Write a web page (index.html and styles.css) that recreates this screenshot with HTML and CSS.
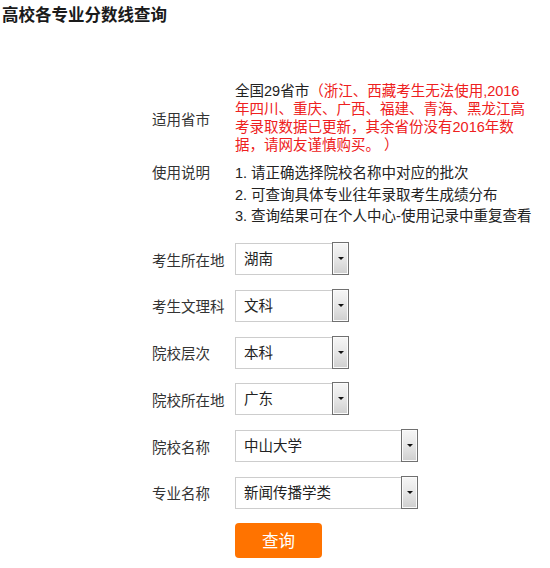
FILE: index.html
```html
<!DOCTYPE html>
<html lang="zh-CN">
<head>
<meta charset="utf-8">
<title>高校各专业分数线查询</title>
<link rel="stylesheet" href="styles.css">
</head>
<body>
<h1 class="title">高校各专业分数线查询</h1>
<div class="form">
  <div class="row row-intro">
    <div class="label">适用省市</div>
    <div class="value intro">全国29省市<span class="warn">（浙江、西藏考生无法使用,2016<br>年四川、重庆、广西、福建、青海、黑龙江高<br>考录取数据已更新，其余省份没有2016年数<br>据，请网友谨慎购买。 ）</span></div>
  </div>
  <div class="row row-usage">
    <div class="label">使用说明</div>
    <ul class="value usage">
      <li>1. 请正确选择院校名称中对应的批次</li>
      <li>2. 可查询具体专业往年录取考生成绩分布</li>
      <li>3. 查询结果可在个人中心-使用记录中重复查看</li>
    </ul>
  </div>
  <div class="row row-field first">
    <div class="label">考生所在地</div>
    <div class="select short"><span class="text">湖南</span><span class="arrow"></span></div>
  </div>
  <div class="row row-field">
    <div class="label">考生文理科</div>
    <div class="select short"><span class="text">文科</span><span class="arrow"></span></div>
  </div>
  <div class="row row-field">
    <div class="label">院校层次</div>
    <div class="select short"><span class="text">本科</span><span class="arrow"></span></div>
  </div>
  <div class="row row-field">
    <div class="label">院校所在地</div>
    <div class="select short"><span class="text">广东</span><span class="arrow"></span></div>
  </div>
  <div class="row row-field">
    <div class="label">院校名称</div>
    <div class="select long"><span class="text">中山大学</span><span class="arrow"></span></div>
  </div>
  <div class="row row-field">
    <div class="label">专业名称</div>
    <div class="select long"><span class="text">新闻传播学类</span><span class="arrow"></span></div>
  </div>
  <div class="row row-submit">
    <div class="label"></div>
    <button class="btn" type="button">查询</button>
  </div>
</div>
</body>
</html>
```
FILE: styles.css
```css
html, body {
  margin: 0;
  padding: 0;
  background: #ffffff;
}
body {
  font-family: "Liberation Sans", "Noto Sans CJK SC", sans-serif;
  font-size: 14.5px;
  color: #333333;
}
.title {
  margin: 0;
  padding: 5px 0 0 2px;
  font-size: 16.5px;
  line-height: 20px;
  font-weight: bold;
  color: #1a1a1a;
}
.form {
  margin: 57px 0 0 152px;
}
.row {
  display: flex;
}
.label {
  width: 83px;
  flex: none;
  color: #333333;
  white-space: nowrap;
}
.row-intro {
  align-items: center;
}
.intro {
  line-height: 18px;
  color: #222222;
  white-space: nowrap;
}
.warn {
  color: #ee2020;
}
.row-usage {
  margin-top: 9px;
  align-items: flex-start;
  line-height: 21.5px;
}
.usage {
  margin: 0;
  padding: 0;
  list-style: none;
  color: #222222;
  white-space: nowrap;
}
.row-field {
  margin-top: 14.8px;
  align-items: center;
}
.row-field.first {
  margin-top: 15.5px;
}
.select {
  display: flex;
  height: 32px;
  box-sizing: border-box;
  border: 1px solid #cdcdcd;
  border-right: none;
  background: #ffffff;
}
.select.short { width: 114px; }
.select.long { width: 183px; }
.select .text {
  flex: 1;
  padding-left: 8px;
  line-height: 30px;
  color: #222222;
}
.select .arrow {
  flex: none;
  width: 17px;
  margin: -2px 0 -1px;
  box-sizing: border-box;
  border: 1px solid #707070;
  background: linear-gradient(#f6f6f6, #e6e6e6 50%, #cfcfcf);
  box-shadow: inset 0 0 0 1px #fbfbfb;
  display: flex;
  align-items: center;
  justify-content: center;
}
.select .arrow::after {
  content: "";
  width: 0;
  height: 0;
  border-left: 3px solid transparent;
  border-right: 3px solid transparent;
  border-top: 3px solid #111111;
}
.row-submit {
  margin-top: 14px;
}
.btn {
  width: 87px;
  height: 35px;
  border: none;
  border-radius: 4px;
  background: #ff7300;
  color: #ffffff;
  font-family: "Liberation Sans", "Noto Sans CJK SC", sans-serif;
  font-size: 16.5px;
  padding: 0;
  cursor: pointer;
}
```
